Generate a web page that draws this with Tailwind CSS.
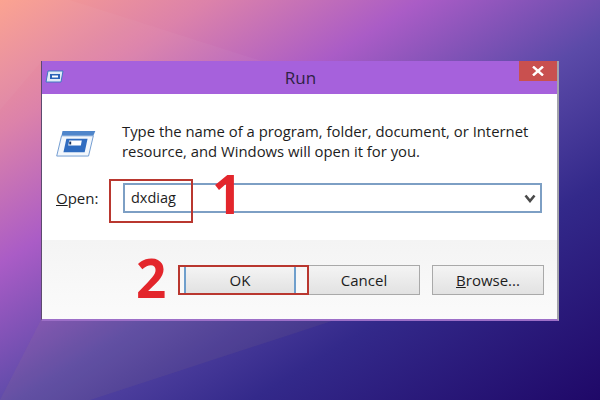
<!DOCTYPE html>
<html>
  <head>
    <meta charset="UTF-8" />
    <script src="https://cdn.jsdelivr.net/npm/@tailwindcss/browser@4"></script>
  </head>
  <body class="m-0">
    <div class="relative w-[600px] h-[400px] overflow-hidden pt-[61px] pl-[41px] font-['Open_Sans',sans-serif] bg-[linear-gradient(148deg,#fba08e_0%,#dc82aa_17%,#aa5cc6_34%,#5b4aa8_53%,#33298a_72%,#1f0868_100%)]">
      <!-- faint light bands in the wallpaper -->
      <div class="absolute inset-0 bg-white/[3%] [clip-path:polygon(0_0,70px_0,265px_62px,41px_62px,0_110px)]"></div>
      <div class="absolute inset-0 bg-[#c8b060]/[7%] [clip-path:polygon(41px_320px,335px_320px,90px_400px,0_400px)]"></div>

      <!-- dialog -->
      <div class="relative w-[518px] h-[260px] bg-white flex flex-col border-l border-r-2 border-b-2 border-l-[#5d4a70] border-r-[#a3a3ab] border-b-[#9d6fc8]">
        <div class="relative h-[33px] shrink-0 bg-[#a661dc] flex items-center justify-center">
          <svg class="absolute left-[3px] top-[9px]" width="19" height="13" viewBox="0 0 19 13">
            <path d="M3 1H18L16 12H1Z" fill="#dfeaf7" stroke="#3f78c4" />
            <rect x="5" y="4" width="10" height="5" fill="#2a64b8" />
            <rect x="7" y="5.5" width="6" height="2" fill="#fff" />
          </svg>
          <span class="text-[17px] text-[#2f2244] pl-[2px]">Run</span>
          <div class="absolute right-0 top-0 w-[38px] h-[20px] bg-[#c9504f] flex items-center justify-center">
            <svg width="12" height="10" viewBox="0 0 12 10">
              <path d="M1 0.5L11 9.5M11 0.5L1 9.5" stroke="#fff" stroke-width="2.4" />
            </svg>
          </div>
        </div>

        <div class="flex-1 flex flex-col bg-white">
          <div class="flex pl-[13px] pt-[27px]">
            <svg class="mt-[9px] shrink-0" width="42" height="27" viewBox="0 0 42 28">
              <path d="M7 1H41L39 6H6Z" fill="#4f86cb" />
              <path d="M6 6H39L34 27H1Z" fill="#f3f7fc" stroke="#6f9ad0" />
              <path d="M11 9H33L30 23H8Z" fill="#2f6cc0" />
              <path d="M14 11H27L26 16H13Z" fill="#fff" />
              <rect x="14" y="12" width="2" height="3" fill="#16305c" />
            </svg>
            <p class="ml-[25px] text-[14.85px] leading-[20px] text-[#1d1d1d] whitespace-nowrap">
              Type the name of a program, folder, document, or Internet<br />resource, and Windows will open it for you.
            </p>
          </div>
          <div class="flex items-center pl-[14px] mt-[22px]">
            <span class="text-[15px] text-[#1d1d1d] w-[67px]"><span class="underline">O</span>pen:</span>
            <div class="w-[419px] h-[30px] border-2 border-[#7d9fc4] flex items-center justify-between pl-[6px] pr-[4px]">
              <span class="text-[14.5px] text-[#1d1d1d]">dxdiag</span>
              <svg width="12" height="9" viewBox="0 0 12 9">
                <path d="M1.5 1.5L6 7L10.5 1.5" fill="none" stroke="#4a4a4a" stroke-width="2.6" />
              </svg>
            </div>
          </div>
          <div class="mt-auto h-[79px] bg-gradient-to-b from-[#f4f4f4] to-[#fbfbfb] flex justify-end items-start pt-[25px] pr-[13px] gap-[12px]">
            <div class="w-[112px] h-[30px] border-2 border-[#6f9fcc] bg-gradient-to-b from-[#f4f4f4] to-[#e2e2e2] flex items-center justify-center text-[15px] text-[#1d1d1d]">OK</div>
            <div class="w-[112px] h-[30px] border border-[#a9a9a9] bg-gradient-to-b from-[#f4f4f4] to-[#e2e2e2] flex items-center justify-center text-[15px] text-[#1d1d1d]">Cancel</div>
            <div class="w-[112px] h-[30px] border border-[#a9a9a9] bg-gradient-to-b from-[#f4f4f4] to-[#e2e2e2] flex items-center justify-center text-[15px] text-[#1d1d1d]"><span><span class="underline">B</span>rowse...</span></div>
          </div>
        </div>
      </div>

      <!-- red annotations -->
      <div class="absolute left-[109px] top-[179px] w-[84px] h-[44px] border-[2px] border-[#b9372f]"></div>
      <div class="absolute left-[178px] top-[265px] w-[131px] h-[30px] border-[2px] border-[#b9372f]"></div>
      <span class="absolute left-[212px] top-[158px] text-[53px] leading-[72px] font-bold text-[#e3262c]">1</span>
      <span class="absolute left-[136px] top-[242px] text-[53px] leading-[72px] font-bold text-[#e3262c]">2</span>
    </div>
  </body>
</html>
